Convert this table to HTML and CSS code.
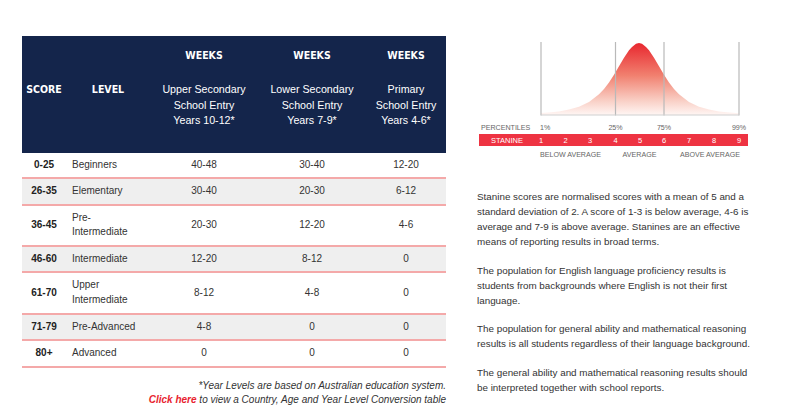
FILE: index.html
```html
<!DOCTYPE html>
<html lang="en">
<head>
<meta charset="utf-8">
<title>Score levels and stanines</title>
<link rel="stylesheet" href="styles.css">
</head>
<body>
<div class="page">
  <section class="left">
    <table class="levels">
      <colgroup>
        <col class="c-score"><col class="c-level"><col class="c-w1"><col class="c-w2"><col class="c-w3">
      </colgroup>
      <thead>
        <tr class="h1">
          <th></th><th></th>
          <th class="cond">WEEKS</th><th class="cond">WEEKS</th><th class="cond">WEEKS</th>
        </tr>
        <tr class="h2">
          <th class="cond">SCORE</th>
          <th class="cond">LEVEL</th>
          <th>Upper Secondary<br>School Entry<br>Years 10-12*</th>
          <th>Lower Secondary<br>School Entry<br>Years 7-9*</th>
          <th>Primary<br>School Entry<br>Years 4-6*</th>
        </tr>
      </thead>
      <tbody>
        <tr><td class="score">0-25</td><td class="level">Beginners</td><td>40-48</td><td>30-40</td><td>12-20</td></tr>
        <tr class="alt"><td class="score">26-35</td><td class="level">Elementary</td><td>30-40</td><td>20-30</td><td>6-12</td></tr>
        <tr><td class="score">36-45</td><td class="level">Pre-Intermediate</td><td>20-30</td><td>12-20</td><td>4-6</td></tr>
        <tr class="alt"><td class="score">46-60</td><td class="level">Intermediate</td><td>12-20</td><td>8-12</td><td>0</td></tr>
        <tr><td class="score">61-70</td><td class="level">Upper Intermediate</td><td>8-12</td><td>4-8</td><td>0</td></tr>
        <tr class="alt"><td class="score">71-79</td><td class="level">Pre-Advanced</td><td>4-8</td><td>0</td><td>0</td></tr>
        <tr><td class="score">80+</td><td class="level">Advanced</td><td>0</td><td>0</td><td>0</td></tr>
      </tbody>
    </table>
    <div class="notes">
      <p>*Year Levels are based on Australian education system.</p>
      <p><a class="link" href="#">Click here</a> to view a Country, Age and Year Level Conversion table</p>
    </div>
  </section>
  <section class="right">
    <svg class="chart" width="279" height="126" viewBox="477 36 279 126" xmlns="http://www.w3.org/2000/svg">
      <defs>
        <linearGradient id="bell" x1="0" y1="0" x2="0" y2="1">
          <stop offset="0" stop-color="#e8272f"/>
          <stop offset="0.45" stop-color="#f1806f"/>
          <stop offset="0.8" stop-color="#f9cfc5"/>
          <stop offset="1" stop-color="#fff6f4"/>
        </linearGradient>
      </defs>
      <polygon fill="url(#bell)" points="541,113.1 549,112.5 559,111.4 569,109.6 579,106.7 589,102 599,94.3 604,89 609,82.4 614,74.8 619,66.3 624,57.8 629,50.2 632,47 636,43.8 639,43 642,43.8 646,47 649,50.2 654,57.8 659,66.3 664,74.8 669,82.4 674,89 679,94.3 689,102 699,106.7 709,109.6 719,111.4 729,112.5 739,113.2 739,115 541,115"/>
      <g stroke="#b9b9b9" stroke-width="1.2">
        <line x1="541" y1="42" x2="541" y2="115.5"/>
        <line x1="615.5" y1="42" x2="615.5" y2="115.5"/>
        <line x1="664" y1="42" x2="664" y2="115.5"/>
        <line x1="739" y1="42" x2="739" y2="115.5"/>
        <line x1="541" y1="115" x2="739" y2="115" stroke="#cfcfcf"/>
      </g>
      <g class="lbl">
        <text x="481" y="130">PERCENTILES</text>
        <text x="540" y="130">1%</text>
        <text x="615.5" y="130" text-anchor="middle">25%</text>
        <text x="664" y="130" text-anchor="middle">75%</text>
        <text x="739" y="130" text-anchor="middle">99%</text>
      </g>
      <rect x="479" y="134" width="269" height="12" fill="#ee3342"/>
      <g class="stn">
        <text x="491" y="143">STANINE</text>
        <text x="541" y="143" text-anchor="middle">1</text>
        <text x="565.5" y="143" text-anchor="middle">2</text>
        <text x="590" y="143" text-anchor="middle">3</text>
        <text x="615.5" y="143" text-anchor="middle">4</text>
        <text x="640" y="143" text-anchor="middle">5</text>
        <text x="664" y="143" text-anchor="middle">6</text>
        <text x="689" y="143" text-anchor="middle">7</text>
        <text x="714" y="143" text-anchor="middle">8</text>
        <text x="739" y="143" text-anchor="middle">9</text>
      </g>
      <g class="lbl">
        <text x="570.5" y="157" text-anchor="middle">BELOW AVERAGE</text>
        <text x="639.5" y="157" text-anchor="middle">AVERAGE</text>
        <text x="710" y="157" text-anchor="middle">ABOVE AVERAGE</text>
      </g>
    </svg>
    <div class="copy">
      <p>Stanine scores are normalised scores with a mean of 5 and a standard deviation of 2. A score of 1-3 is below average, 4-6 is average and 7-9 is above average. Stanines are an effective means of reporting results in broad terms.</p>
      <p>The population for English language proficiency results is students from backgrounds where English is not their first language.</p>
      <p>The population for general ability and mathematical reasoning results is all students regardless of their language background.</p>
      <p>The general ability and mathematical reasoning results should be interpreted together with school reports.</p>
    </div>
  </section>
</div>
</body>
</html>
```

FILE: styles.css
```css
* { box-sizing: border-box; }
html, body { margin: 0; padding: 0; background: #fff; }
body {
  font-family: "Liberation Sans", Arial, sans-serif;
  color: #333;
  width: 800px;
  height: 419px;
  overflow: hidden;
}
.page {
  display: flex;
  gap: 31px;
  padding: 36px 0 0 22px;
}
.left { width: 424px; }
.right { width: 279px; }

.levels {
  width: 424px;
  border-collapse: collapse;
  table-layout: fixed;
  font-size: 10px;
}
.c-score { width: 44px; }
.c-level { width: 84px; }
.c-w1 { width: 108px; }
.c-w2 { width: 108px; }
.c-w3 { width: 80px; }

.levels thead th {
  background: #14254b;
  color: #fff;
  font-weight: normal;
  font-size: 10.7px;
  text-align: center;
  vertical-align: top;
  padding: 0 2px;
}
.levels .h1 th { padding-top: 12px; height: 27px; line-height: 15px; }
.levels .h2 th { padding-top: 19px; padding-bottom: 23.5px; line-height: 15.5px; height: 89.5px; }
.levels th.cond {
  font-family: "DejaVu Sans Condensed", "Liberation Sans Narrow", "Roboto Condensed", Roboto, sans-serif;
  font-weight: bold;
  font-stretch: condensed;
  font-size: 10.5px;
}

.levels td {
  padding: 5px 4px;
  line-height: 14.6px;
  text-align: center;
  vertical-align: middle;
  border-bottom: 2px solid #f4a9a9;
  color: #333;
}
.levels tr.alt td { background: #efefef; }
.levels td.score { font-weight: bold; color: #222; padding: 5px 2px; }
.levels td.level { text-align: left; padding-left: 6px; padding-right: 10px; }

.notes {
  margin-top: 11px;
  text-align: right;
  font-style: italic;
  font-size: 10px;
  line-height: 14px;
  color: #333;
}
.notes p { margin: 0; }
.link { color: #e8232f; font-weight: bold; text-decoration: none; }

.chart { display: block; }
.chart .lbl text {
  font-family: "Liberation Sans", Arial, sans-serif;
  font-size: 7.1px;
  fill: #666;
}
.chart .stn text {
  font-family: "Liberation Sans", Arial, sans-serif;
  font-size: 7.5px;
  fill: #fff;
}

.copy {
  margin-top: 27px;
  font-size: 9.85px;
  line-height: 15px;
  color: #333;
}
.copy p { margin: 0 0 13.5px; }
```
